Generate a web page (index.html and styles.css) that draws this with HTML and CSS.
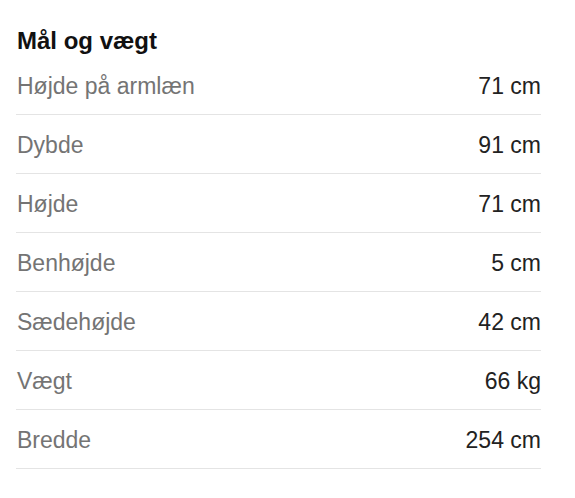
FILE: index.html
```html
<!DOCTYPE html>
<html lang="da">
<head>
<meta charset="utf-8">
<link rel="stylesheet" href="styles.css">
</head>
<body>
<section class="specs">
  <h2 class="specs-title">Mål og vægt</h2>
  <ul class="spec-list">
    <li class="spec-row"><span class="spec-label">Højde på armlæn</span><span class="spec-value">71 cm</span></li>
    <li class="spec-row"><span class="spec-label">Dybde</span><span class="spec-value">91 cm</span></li>
    <li class="spec-row"><span class="spec-label">Højde</span><span class="spec-value">71 cm</span></li>
    <li class="spec-row"><span class="spec-label">Benhøjde</span><span class="spec-value">5 cm</span></li>
    <li class="spec-row"><span class="spec-label">Sædehøjde</span><span class="spec-value">42 cm</span></li>
    <li class="spec-row"><span class="spec-label">Vægt</span><span class="spec-value">66 kg</span></li>
    <li class="spec-row"><span class="spec-label">Bredde</span><span class="spec-value">254 cm</span></li>
  </ul>
</section>
</body>
</html>
```
FILE: styles.css
```css
html, body {
  margin: 0;
  padding: 0;
  background: #ffffff;
}
body {
  font-family: "Liberation Sans", Arial, Helvetica, sans-serif;
}
.specs {
  padding: 29px 34px 0 16px;
}
.specs-title {
  margin: 0 0 3px 1px;
  font-size: 24px;
  line-height: 24px;
  font-weight: 700;
  color: #111111;
}
.spec-list {
  list-style: none;
  margin: 0;
  padding: 0;
}
.spec-row {
  display: flex;
  justify-content: space-between;
  align-items: center;
  box-sizing: border-box;
  height: 59px;
  padding-top: 2px;
  line-height: 56px;
  border-bottom: 1px solid #e4e4e4;
  font-size: 23px;
}
.spec-label {
  padding-left: 1px;
  color: #747474;
}
.spec-value {
  color: #222222;
}
```
